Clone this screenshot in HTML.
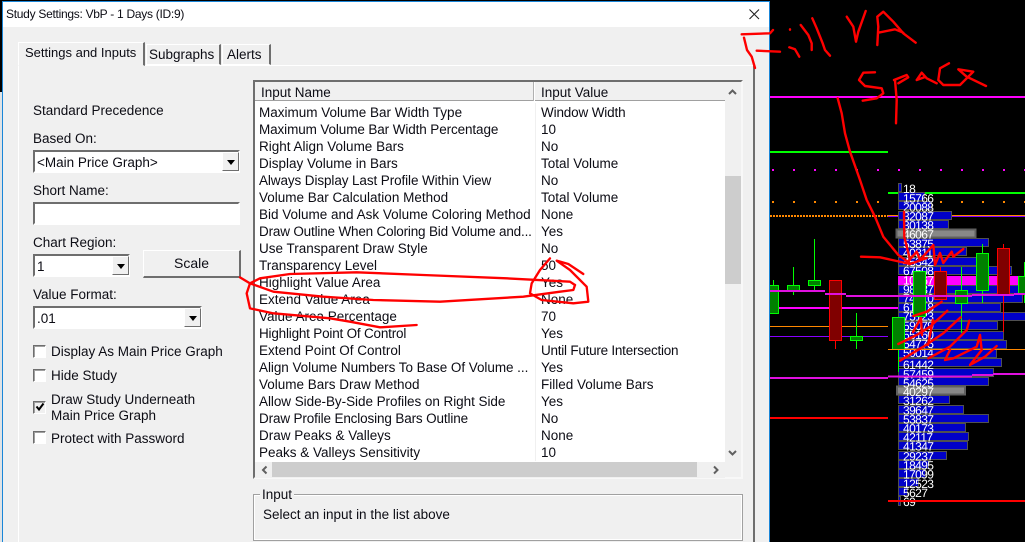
<!DOCTYPE html>
<html><head><meta charset="utf-8"><style>
html,body{margin:0;padding:0;background:#000}
#r{position:relative;width:1025px;height:542px;overflow:hidden;background:#000;font-family:"Liberation Sans",sans-serif;font-size:13.5px;color:#0c0c14}
#r div,#r span{position:absolute;box-sizing:border-box}
.t{line-height:16px;white-space:nowrap;margin-top:1px}
.sunk{border-style:solid;border-width:2px;border-color:#6e6e6e #fff #fff #6e6e6e;background:#fff}
.btn{background:#f0f0f0;border:1px solid;border-color:#fff #6e6e6e #6e6e6e #fff}
.btn::after{content:"";position:absolute;left:4px;top:7px;border:4px solid transparent;border-top:5px solid #000;border-bottom:0}
.cb{width:13px;height:13px;left:33px;background:#fff;border:1px solid;border-color:#6e6e6e #fff #fff #6e6e6e;box-shadow:inset 1px 1px 0 #a0a0a0}
svg{position:absolute;left:0;top:0}
</style></head><body><div id="r">
<div style="left:0;top:92px;width:2px;height:450px;background:#dfe3e6"></div>
<div style="left:2px;top:1px;width:768px;height:541px;background:#f0f0f0;border:1px solid #1a86d8;border-bottom:0"></div>
<div style="left:3px;top:2px;width:766px;height:25px;background:#fff"></div>
<span class="t" style="left:6px;top:5px;font-size:12px;letter-spacing:-.28px">Study Settings: VbP - 1 Days (ID:9)</span>
<svg width="1025" height="542" style="z-index:1"><path d="M749.5 9.5L759 19M759 9.5L749.5 19" stroke="#222" stroke-width="1.1" fill="none"/></svg>

<!-- tab panel -->
<div style="left:18px;top:65px;width:737px;height:490px;border:1px solid;border-color:#fff #6e6e6e #fff #fff;border-right-width:2px"></div>
<div style="left:18px;top:42px;width:127px;height:24px;background:#f0f0f0;border:1px solid;border-color:#fff #6e6e6e #f0f0f0 #fff;border-right-width:2px"></div>
<div style="left:146px;top:44px;width:75px;height:21px;background:#f0f0f0;border:1px solid;border-color:#fff #6e6e6e #fff #fff;border-right-width:2px"></div>
<div style="left:222px;top:44px;width:49px;height:21px;background:#f0f0f0;border:1px solid;border-color:#fff #6e6e6e #fff #fff;border-right-width:2px"></div>
<span class="t" style="left:25px;top:44px;font-size:13px">Settings and Inputs</span>
<span class="t" style="left:149px;top:46px">Subgraphs</span>
<span class="t" style="left:227px;top:46px">Alerts</span>

<!-- left column -->
<span class="t" style="left:33px;top:102px">Standard Precedence</span>
<span class="t" style="left:33px;top:130px">Based On:</span>
<div class="sunk" style="left:33px;top:150px;width:207px;height:23px"></div>
<span class="t" style="left:37px;top:154px">&lt;Main Price Graph&gt;</span>
<div class="btn" style="left:222px;top:152px;width:17px;height:19px"></div>
<span class="t" style="left:33px;top:182px">Short Name:</span>
<div class="sunk" style="left:33px;top:202px;width:207px;height:23px"></div>
<span class="t" style="left:33px;top:234px">Chart Region:</span>
<div class="sunk" style="left:33px;top:254px;width:97px;height:23px"></div>
<span class="t" style="left:37px;top:258px">1</span>
<div class="btn" style="left:112px;top:256px;width:17px;height:19px"></div>
<div style="left:143px;top:250px;width:98px;height:28px;background:#f0f0f0;border:1px solid;border-color:#fff #6e6e6e #6e6e6e #fff;border-right-width:2px;border-bottom-width:2px"></div>
<span class="t" style="left:143px;top:254px;width:97px;text-align:center;font-size:14px">Scale</span>
<span class="t" style="left:33px;top:286px">Value Format:</span>
<div class="sunk" style="left:33px;top:306px;width:169px;height:23px"></div>
<span class="t" style="left:37px;top:310px">.01</span>
<div class="btn" style="left:184px;top:308px;width:17px;height:19px"></div>

<div class="cb" style="top:345px"></div><span class="t" style="left:51px;top:343px">Display As Main Price Graph</span>
<div class="cb" style="top:369px"></div><span class="t" style="left:51px;top:367px">Hide Study</span>
<div class="cb" style="top:401px;background:#f0f0f0"></div><span class="t" style="left:51px;top:391px">Draw Study Underneath</span><span class="t" style="left:51px;top:407px">Main Price Graph</span>
<div class="cb" style="top:431px"></div><span class="t" style="left:51px;top:430px">Protect with Password</span>
<svg width="1025" height="542" style="z-index:1"><path d="M36.5 406.5L39 409.5L43.5 403.5" stroke="#000" stroke-width="2" fill="none"/></svg>

<!-- list -->
<div style="left:253px;top:80px;width:490px;height:399px;background:#fff;border:2px solid;border-color:#6e6e6e #f8f8f8 #f8f8f8 #6e6e6e"></div>
<div style="left:255px;top:82px;width:470px;height:19px;background:#f0f0f0;border-bottom:1px solid #a0a0a0"></div>
<div style="left:255px;top:101px;width:470px;height:2px;background:#fff"></div>
<div style="left:533px;top:82px;width:2px;height:19px;background:#b0b0b0;border-right:1px solid #fff"></div>
<div style="left:535px;top:103px;width:1px;height:358px;background:#f0f0f0"></div>
<div style="left:255px;top:103px;width:470px;height:358px;background:repeating-linear-gradient(to bottom,transparent 0,transparent 17px,#f0f0f0 17px,#f0f0f0 18px);background-size:100% 17px"></div>
<span class="t" style="left:261px;top:84px">Input Name</span>
<span class="t" style="left:541px;top:84px">Input Value</span>

<span class="t" style="left:259px;top:104px">Maximum Volume Bar Width Type</span><span class="t" style="left:541px;top:104px;letter-spacing:-.15px">Window Width</span>
<span class="t" style="left:259px;top:121px;letter-spacing:-.11px">Maximum Volume Bar Width Percentage</span><span class="t" style="left:541px;top:121px">10</span>
<span class="t" style="left:259px;top:138px">Right Align Volume Bars</span><span class="t" style="left:541px;top:138px">No</span>
<span class="t" style="left:259px;top:155px">Display Volume in Bars</span><span class="t" style="left:541px;top:155px">Total Volume</span>
<span class="t" style="left:259px;top:172px;letter-spacing:-.1px">Always Display Last Profile Within View</span><span class="t" style="left:541px;top:172px">No</span>
<span class="t" style="left:259px;top:189px">Volume Bar Calculation Method</span><span class="t" style="left:541px;top:189px">Total Volume</span>
<span class="t" style="left:259px;top:206px">Bid Volume and Ask Volume Coloring Method</span><span class="t" style="left:541px;top:206px">None</span>
<span class="t" style="left:259px;top:223px;letter-spacing:-.18px">Draw Outline When Coloring Bid Volume and...</span><span class="t" style="left:541px;top:223px">Yes</span>
<span class="t" style="left:259px;top:240px">Use Transparent Draw Style</span><span class="t" style="left:541px;top:240px">No</span>
<span class="t" style="left:259px;top:257px">Transparency Level</span><span class="t" style="left:541px;top:257px">50</span>
<span class="t" style="left:259px;top:274px">Highlight Value Area</span><span class="t" style="left:541px;top:274px">Yes</span>
<span class="t" style="left:259px;top:291px">Extend Value Area</span><span class="t" style="left:541px;top:291px">None</span>
<span class="t" style="left:259px;top:308px">Value Area Percentage</span><span class="t" style="left:541px;top:308px">70</span>
<span class="t" style="left:259px;top:325px;letter-spacing:-.2px">Highlight Point Of Control</span><span class="t" style="left:541px;top:325px">Yes</span>
<span class="t" style="left:259px;top:342px">Extend Point Of Control</span><span class="t" style="left:541px;top:342px;letter-spacing:-.24px">Until Future Intersection</span>
<span class="t" style="left:259px;top:359px;letter-spacing:-.05px">Align Volume Numbers To Base Of Volume ...</span><span class="t" style="left:541px;top:359px">Yes</span>
<span class="t" style="left:259px;top:376px">Volume Bars Draw Method</span><span class="t" style="left:541px;top:376px">Filled Volume Bars</span>
<span class="t" style="left:259px;top:393px;letter-spacing:-.05px">Allow Side-By-Side Profiles on Right Side</span><span class="t" style="left:541px;top:393px">Yes</span>
<span class="t" style="left:259px;top:410px;letter-spacing:-.14px">Draw Profile Enclosing Bars Outline</span><span class="t" style="left:541px;top:410px">No</span>
<span class="t" style="left:259px;top:427px">Draw Peaks &amp; Valleys</span><span class="t" style="left:541px;top:427px">None</span>
<span class="t" style="left:259px;top:444px">Peaks &amp; Valleys Sensitivity</span><span class="t" style="left:541px;top:444px">10</span>

<!-- scrollbars -->
<div style="left:725px;top:82px;width:16px;height:395px;background:#f0f0f0"></div>
<div style="left:725px;top:176px;width:16px;height:108px;background:#cdcdcd"></div>
<div style="left:255px;top:462px;width:470px;height:16px;background:#f0f0f0"></div>
<div style="left:272px;top:462px;width:425px;height:15px;background:#cdcdcd"></div>
<svg width="1025" height="542" style="z-index:1"><g stroke="#606060" stroke-width="2" fill="none"><path d="M729 94L732.5 90.5L736 94M729 451L732.5 454.5L736 451M714 466.5L717.5 470L714 473.5M266.500 466.500L263 470L266.500 473.500"/></g></svg>

<!-- group -->
<div style="left:253px;top:494px;width:490px;height:47px;border:1px solid #a0a0a0;box-shadow:0 0 0 1px #fff inset"></div>
<span class="t" style="left:260px;top:486px;background:#f0f0f0;padding:0 2px">Input</span>
<span class="t" style="left:263px;top:506px">Select an input in the list above</span>

<!-- chart -->
<svg width="1025" height="542" viewBox="0 0 1025 542" style="z-index:2;clip-path:inset(0 0 0 770px)" shape-rendering="crispEdges">
<g fill="none" stroke-width="2">
<path d="M770 97H1025" stroke="#f0f"/>
<path d="M770 152H888" stroke="#0f0"/>
<path d="M772 170H1025" stroke="#f0f" stroke-dasharray="2 19"/>
<path d="M888 193H1025" stroke="#0f0"/>
<path d="M772 202H1025" stroke="#f80" stroke-dasharray="2 19"/>
<path d="M770 216H888" stroke="#f80" stroke-dasharray="2 1"/>
<path d="M888 215.500H1025" stroke="#f80" stroke-width="1"/><path d="M888 216.500H1025" stroke="#80f" stroke-width="1"/>
<path d="M779 308H898" stroke="#f0f"/>
<path d="M770 326.500H888" stroke="#f80" stroke-width="1"/>
<path d="M770 336.500H888" stroke="#80f" stroke-width="1"/>
<path d="M770 418H888" stroke="#f00"/>
</g>
<g fill="#0000c8" stroke="#505050" stroke-width="1">
<rect x="898.500" y="183.500" width="3" height="8"/>
<rect x="898.500" y="192.500" width="26" height="8"/>
<rect x="898.500" y="201.500" width="33" height="8"/>
<rect x="898.500" y="211.500" width="53" height="8"/>
<rect x="898.500" y="220.500" width="50" height="8"/>
<rect x="896.500" y="229.500" width="79" height="8" fill="#888" stroke="#606060" stroke-width="2"/>
<rect x="898.500" y="238.500" width="90" height="8"/>
<rect x="898.500" y="247.500" width="68" height="8"/>
<rect x="898.500" y="257.500" width="81" height="8"/>
<rect x="898.500" y="266.500" width="113" height="8"/>
<rect x="898" y="276" width="127" height="10" fill="#f0f" stroke="none"/>
<rect x="898.500" y="285.500" width="127" height="8"/>
<rect x="898.500" y="294.500" width="124" height="8"/>
<rect x="898.500" y="303.500" width="102" height="8"/>
<rect x="898.500" y="312.500" width="127" height="8"/>
<rect x="898.500" y="321.500" width="99" height="8"/>
<rect x="898.500" y="331.500" width="105" height="8"/>
<rect x="898.500" y="340.500" width="108" height="8"/>
<rect x="898.500" y="349.500" width="98" height="8"/>
<rect x="898.500" y="358.500" width="103" height="8"/>
<rect x="898.500" y="368.500" width="95" height="8"/>
<rect x="898.500" y="377.500" width="90" height="8"/>
<rect x="897" y="386.500" width="68" height="8" fill="#888" stroke="#606060" stroke-width="2"/>
<rect x="898.500" y="395.500" width="51" height="8"/>
<rect x="898.500" y="405.500" width="65" height="8"/>
<rect x="898.500" y="414.500" width="90" height="8"/>
<rect x="898.500" y="423.500" width="67" height="8"/>
<rect x="898.500" y="432.500" width="70" height="8"/>
<rect x="898.500" y="441.500" width="69" height="8"/>
<rect x="898.500" y="451.500" width="48" height="8"/>
<rect x="898.500" y="460.500" width="30" height="8"/>
<rect x="898.500" y="469.500" width="27" height="8"/>
<rect x="898.500" y="478.500" width="20" height="8"/>
<rect x="898.500" y="487.500" width="9" height="8"/>
<rect x="898.500" y="496.500" width="2" height="9"/>
</g>
<g font-family="Liberation Sans, sans-serif" font-size="12" fill="#fff" text-rendering="geometricPrecision" shape-rendering="auto" letter-spacing="-.6">
<text x="903" y="193">18</text><text x="903" y="202.500">15766</text><text x="903" y="211.500">20088</text><text x="903" y="220.500">32087</text><text x="903" y="229.500">30138</text><text x="903" y="238.500">46067</text><text x="903" y="248">53875</text><text x="903" y="257">40811</text><text x="903" y="266">45342</text><text x="903" y="275">67508</text><text x="903" y="284.500">10067</text><text x="903" y="293.500">98337</text><text x="903" y="302.500">74010</text><text x="903" y="311.500">61018</text><text x="903" y="320.500">75123</text><text x="903" y="330">59079</text><text x="903" y="339">55160</text><text x="903" y="348">54775</text><text x="903" y="357">50014</text><text x="903" y="369">61442</text><text x="903" y="378.500">57459</text><text x="903" y="387.500">54625</text><text x="903" y="396">40297</text><text x="903" y="405">31262</text><text x="903" y="414.500">39647</text><text x="903" y="423.500">53837</text><text x="903" y="432.500">40173</text><text x="903" y="441.500">42117</text><text x="903" y="450.500">41347</text><text x="903" y="460.500">29237</text><text x="903" y="469.500">18495</text><text x="903" y="478.500">17099</text><text x="903" y="488">12523</text><text x="903" y="497">5627</text><text x="903" y="506">69</text>
</g>
<!-- wicks -->
<g stroke="#0f0" stroke-width="1" fill="none">
<path d="M773.500 280V286M793.500 267V295M814.500 239V290M856.500 313V349M898.500 350V372M961.500 267V333M982.500 244V303M1024.500 262V303"/>
</g>
<g stroke="#f00" stroke-width="1" fill="none"><path d="M835.500 341V349M940.500 267V272M1003.500 244V332"/></g>
<!-- bodies -->
<g fill="#008000" stroke="#0f0" stroke-width="1">
<rect x="766.500" y="285.500" width="12" height="28"/>
<rect x="787.500" y="285.500" width="12" height="5"/>
<rect x="808.500" y="280.500" width="12" height="5"/>
<rect x="850.500" y="336.500" width="12" height="4"/>
<rect x="892.500" y="317.500" width="12" height="32"/>
<rect x="913.500" y="271.500" width="12" height="45"/>
<rect x="955.500" y="290.500" width="12" height="13"/>
<rect x="976.500" y="253.500" width="12" height="37"/>
<rect x="1018.500" y="276.500" width="12" height="18"/>
</g>
<g fill="#800000" stroke="#f00" stroke-width="1">
<rect x="829.500" y="280.500" width="12" height="60"/>
<rect x="934.500" y="271.500" width="12" height="28"/>
<rect x="997.500" y="248.500" width="12" height="46"/>
</g>
<g fill="none" stroke-width="2">
<path d="M770 291H825" stroke="#e010e0"/><path d="M825 294H846" stroke="#e010e0"/><path d="M846 296H972" stroke="#e010e0"/><path d="M972 295H1014" stroke="#e010e0"/><path d="M1014 294H1025" stroke="#e010e0"/>
<path d="M770 378H888" stroke="#e010e0"/><path d="M888 376.500H972" stroke="#e010e0"/><path d="M972 375H993" stroke="#e010e0"/><path d="M993 374H1025" stroke="#e010e0"/>
<path d="M888 501H1025" stroke="#f00"/>
<path d="M888 349.500H1025" stroke="#f80" stroke-width="1"/>
</g>
</svg>

<!-- red scribbles -->
<svg width="1025" height="542" viewBox="0 0 1025 542" style="z-index:3">
<g fill="none" stroke="#f00" stroke-width="2.400" stroke-linecap="round" stroke-linejoin="round">
<path d="M741.700 34.300L770 33.300L773 30M744 37.700L747 50L751.700 56.700L755 68M756.700 50.700L780 51.700"/>
<path d="M790 29.300V29.800M789.300 47.300L795 49.300L799.300 56.700M800.700 25L808.300 35L811.700 43.300V50M812.300 18.300L816.700 28.300L822.700 43.300L825 50L830 55.700"/>
<path d="M846.700 16.700L853.300 26.700L856 41.700L858.300 31.700L865.700 11"/>
<path d="M877.300 45L878.300 26.700L877.300 16.700L883.300 11.700L893.300 21.700L903.300 33.300L915.700 42.700M878.300 32.700L895 29.300L903.300 32.700"/>
<path d="M875 72.300L863.300 72.700L859 80L865 86L881.700 88.300L883.300 93.300L876.700 98.300L862.700 100.700"/>
<path d="M895 80L896.700 100L896 123.300M894 80L906.700 75L908.300 77.300L898.300 83.300"/>
<path d="M916.700 80L921.700 72.700L926.700 78.300L936.700 83.300M916.700 80L925 77"/>
<path d="M949 63.300L940 68.300L938.300 80L943.300 85H960L973.300 71.700L958.300 69.300L966.700 76.700L986 86"/>
<path d="M837.700 98.300L841.700 113.300L845 133.300L850 151.700L860 180L866.700 200L875 216.700L883.300 236.700L898.300 255L910 263.300"/>
<path d="M861 256.700L880 257.300L896.700 261L910 264L926.700 258"/>
<path d="M904 211.700L904.300 236.700L910 260M906.700 263L916.700 251.700L920 260L933.300 245L935 265L940 253L943.300 263L951.700 251.700L953.300 256.700L963.300 249"/>
<path d="M941.700 301.700L926.700 311.700L913.300 316M947.300 310.700L930 326.700L916.700 335L898.300 344M960.700 317.300L943.300 333.300L923.300 346.700L900 360.700M969.300 320.700L966.700 330L950 346.700L928.300 358.300M980 335L976.700 346.700L953.300 358.300L945 360L950 350M980 335L981.700 350L970 365L985 356.700L996.700 346M913 332L921 318L922 335M933 320L928 345"/>
<g transform="translate(240,240) scale(.33333)" stroke-width="7">
<path d="M1005 135L990 125L800 115L550 105L350 97L150 102L60 115L30 130L20 160L30 205L100 220L270 235L330 245L420 262L530 255"/>
<path d="M0 112L30 130L100 155L250 170L400 180L600 185L850 170L960 155L1000 150L1005 135"/>
<path d="M930 55L900 90L875 130L870 160L905 180L1000 190L1045 185L1040 140L990 90L950 62L985 72L1030 102"/>
</g>
</g></svg>
</div></body></html>
